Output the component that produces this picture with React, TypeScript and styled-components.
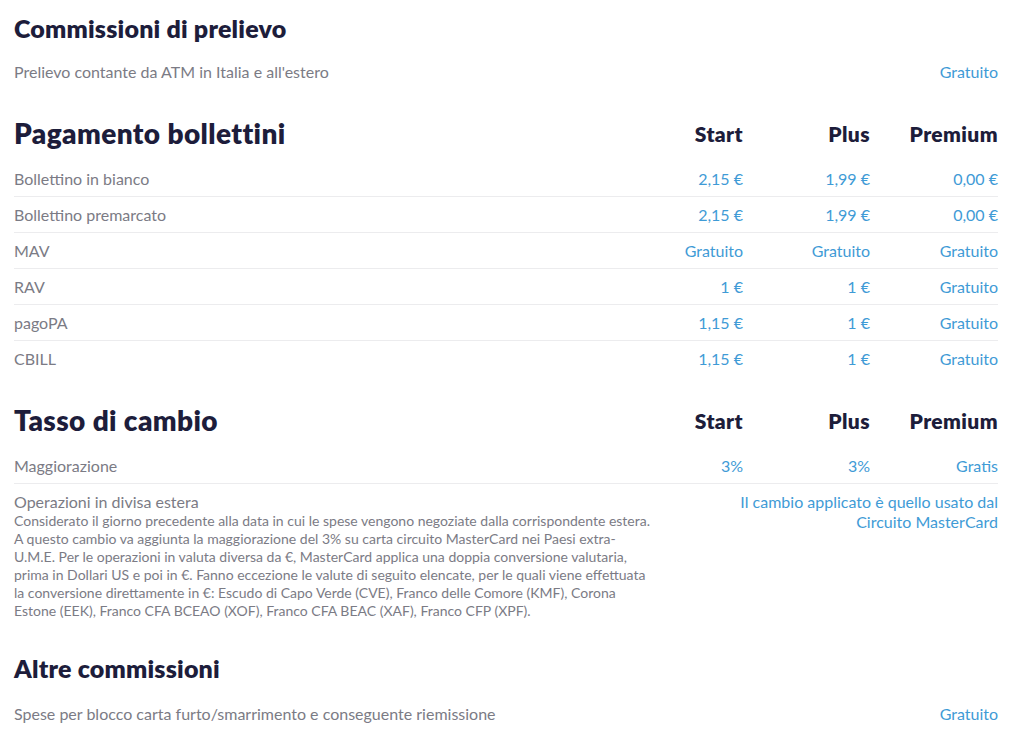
import React from "react";
import styled, { createGlobalStyle } from "styled-components";

const GlobalStyle = createGlobalStyle`
  body {
    margin: 0;
    background: #ffffff;
    font-family: "Lato", "Liberation Sans", sans-serif;
  }
`;

const Page = styled.div`
  padding: 8px 26px 16px 14px;
`;

const Section = styled.section<{ gap?: number }>`
  margin-top: ${(p) => (p.gap ?? 23)}px;
  &:first-child {
    margin-top: 0;
  }
`;

const Grid = styled.div`
  display: grid;
  grid-template-columns: 1fr 127px 127px 128px;
`;

const HeadRow = styled(Grid)<{ tight?: boolean }>`
  height: 40px;
  align-items: center;
  margin-bottom: ${(p) => (p.tight ? 6 : 8)}px;
`;

const Title = styled.h2<{ big?: boolean }>`
  margin: 0;
  font-size: ${(p) => (p.big ? "28px" : "25px")};
  font-weight: 800;
  color: #1d1d3b;
  letter-spacing: ${(p) => (p.big ? 0.4 : 0.2)}px;
  grid-column: 1;
`;

const Plan = styled.div`
  text-align: right;
  font-size: 21px;
  font-weight: 800;
  color: #1d1d3b;
  letter-spacing: 0.4px;
`;

const Row = styled(Grid)<{ line?: boolean }>`
  min-height: 36px;
  align-items: center;
  border-bottom: 1px solid ${(p) => (p.line ? "#ececee" : "transparent")};
  box-sizing: border-box;
`;

const Label = styled.div`
  font-size: 16px;
  color: #7b7b85;
`;

const Value = styled.div<{ span?: number }>`
  text-align: right;
  font-size: 16px;
  color: #3f9bd6;
  ${(p) => (p.span ? `grid-column: span ${p.span};` : "")}
`;

const LongRow = styled.div`
  display: flex;
  justify-content: space-between;
  align-items: flex-start;
  padding: 8px 0;
`;

const LongLabel = styled.div`
  font-size: 16px;
  line-height: 20px;
  color: #7b7b85;
`;

const Note = styled.div`
  width: 670px;
  font-size: 14px;
  line-height: 18px;
  color: #7b7b85;
`;

const LongValue = styled.div`
  width: 266px;
  text-align: right;
  font-size: 16px;
  line-height: 20px;
  color: #3f9bd6;
`;

const bollettini = [
  ["Bollettino in bianco", "2,15 €", "1,99 €", "0,00 €"],
  ["Bollettino premarcato", "2,15 €", "1,99 €", "0,00 €"],
  ["MAV", "Gratuito", "Gratuito", "Gratuito"],
  ["RAV", "1 €", "1 €", "Gratuito"],
  ["pagoPA", "1,15 €", "1 €", "Gratuito"],
  ["CBILL", "1,15 €", "1 €", "Gratuito"],
];

const noteLines = [
  "Considerato il giorno precedente alla data in cui le spese vengono negoziate dalla corrispondente estera.",
  "A questo cambio va aggiunta la maggiorazione del 3% su carta circuito MasterCard nei Paesi extra-",
  "U.M.E. Per le operazioni in valuta diversa da €, MasterCard applica una doppia conversione valutaria,",
  "prima in Dollari US e poi in €. Fanno eccezione le valute di seguito elencate, per le quali viene effettuata",
  "la conversione direttamente in €: Escudo di Capo Verde (CVE), Franco delle Comore (KMF), Corona",
  "Estone (EEK), Franco CFA BCEAO (XOF), Franco CFA BEAC (XAF), Franco CFP (XPF).",
];

const Plans = () => (
  <>
    <Plan>Start</Plan>
    <Plan>Plus</Plan>
    <Plan>Premium</Plan>
  </>
);

export default function App() {
  return (
    <Page>
      <GlobalStyle />

      <Section>
        <HeadRow tight>
          <Title>Commissioni di prelievo</Title>
        </HeadRow>
        <Row>
          <Label>Prelievo contante da ATM in Italia e all'estero</Label>
          <Value span={3}>Gratuito</Value>
        </Row>
      </Section>

      <Section>
        <HeadRow>
          <Title big>Pagamento bollettini</Title>
          <Plans />
        </HeadRow>
        {bollettini.map(([name, a, b, c], i) => (
          <Row key={name} line={i < bollettini.length - 1}>
            <Label>{name}</Label>
            <Value>{a}</Value>
            <Value>{b}</Value>
            <Value>{c}</Value>
          </Row>
        ))}
      </Section>

      <Section>
        <HeadRow>
          <Title big>Tasso di cambio</Title>
          <Plans />
        </HeadRow>
        <Row line>
          <Label>Maggiorazione</Label>
          <Value>3%</Value>
          <Value>3%</Value>
          <Value>Gratis</Value>
        </Row>
        <LongRow>
          <div>
            <LongLabel>Operazioni in divisa estera</LongLabel>
            <Note>
              {noteLines.map((line, i) => (
                <React.Fragment key={i}>
                  {line}
                  {i < noteLines.length - 1 && <br />}
                </React.Fragment>
              ))}
            </Note>
          </div>
          <LongValue>
            Il cambio applicato è quello usato dal Circuito MasterCard
          </LongValue>
        </LongRow>
      </Section>

      <Section gap={20}>
        <HeadRow>
          <Title>Altre commissioni</Title>
        </HeadRow>
        <Row>
          <Label>Spese per blocco carta furto/smarrimento e conseguente riemissione</Label>
          <Value span={3}>Gratuito</Value>
        </Row>
      </Section>
    </Page>
  );
}
